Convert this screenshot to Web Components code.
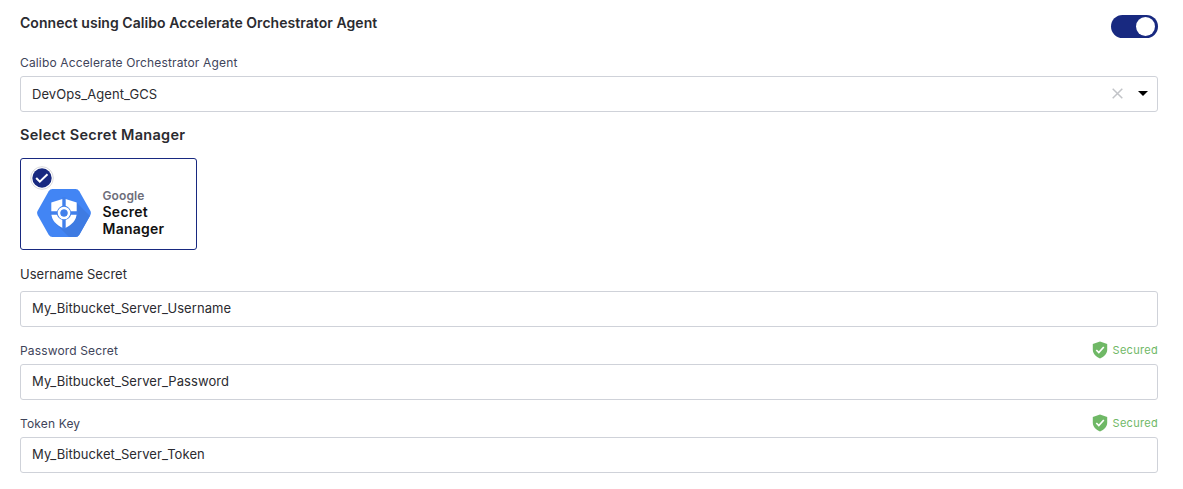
<!DOCTYPE html>
<html lang="en">
<head>
<meta charset="utf-8">
<title>Orchestrator Agent</title>
<style>
  body {
    margin: 0;
    background: #fff;
    font-family: Inter, "Liberation Sans", sans-serif;
  }
</style>
</head>
<body>
<agent-form></agent-form>

<script>
const define = (name, html) =>
  customElements.define(
    name,
    class extends HTMLElement {
      constructor() {
        super();
        this.attachShadow({ mode: "open" }).innerHTML = html;
      }
    }
  );

define("form-heading", `
  <style>
    :host { display: block; font-size: 14px; font-weight: 600; line-height: 20px; letter-spacing: .05px; color: #2b2b30; white-space: nowrap }
  </style>
  <slot></slot>`);

define("toggle-switch", `
  <style>
    :host { display: flex; box-sizing: border-box; width: 47px; height: 23px; padding: 2px 3px; border-radius: 12px; background: #182980; justify-content: flex-end }
    i { width: 19px; height: 19px; border-radius: 50%; background: #fff }
  </style>
  <i></i>`);

define("secured-badge", `
  <style>
    :host { display: flex; align-items: center; gap: 5px; padding-bottom: 2px; font-size: 11px; line-height: 18px; letter-spacing: .3px; color: #6fb866; white-space: nowrap }
    svg { display: block }
  </style>
  <svg width="16" height="18" viewBox="0 0 16 18">
    <path d="M8 .5 15.2 3v5.8c0 4-3.2 7.2-7.2 8.7C4 16 .8 12.8.8 8.8V3z" fill="#6fb866"/>
    <path d="m4.3 9 2.5 2.500 5-5.500" fill="none" stroke="#fff" stroke-width="1.7"/>
  </svg>
  <span><slot></slot></span>`);

// label row on top, bordered value box below
define("form-field", `
  <style>
    :host { display: block }
    .top { display: flex; justify-content: space-between; align-items: center; box-sizing: border-box; height: var(--label-height, 28px); padding: var(--label-padding, 1px 0 0) }
    .label { font-size: var(--label-size, 12px); line-height: 18px; letter-spacing: var(--label-spacing, .15px); color: var(--label-color, #40445a); white-space: nowrap }
    .box { display: flex; align-items: center; justify-content: space-between; box-sizing: border-box; height: 36px; padding: 0 9px 0 11px; border: 1px solid #cfd2d9; border-radius: 3px; background: #fff }
    .value { font-size: 13px; line-height: 20px; letter-spacing: .07px; color: #2b2b30; padding-bottom: var(--value-lift, 2px) }
  </style>
  <div class="top"><span class="label"><slot name="label"></slot></span><slot name="badge"></slot></div>
  <div class="box"><span class="value"><slot></slot></span><slot name="end"></slot></div>`);

define("select-actions", `
  <style>
    :host { display: flex; align-items: center; gap: 15px; padding-bottom: 1px }
    svg { display: block }
  </style>
  <svg width="11" height="11" viewBox="0 0 11 11"><path d="m.7.7 9.6 9.6M10.3.7.7 10.3" stroke="#c2c4c8" stroke-width="1.5"/></svg>
  <svg width="10" height="5" viewBox="0 0 10 5"><path d="M0 0h10L5 5z"/></svg>`);

define("provider-card", `
  <style>
    :host { position: relative; display: flex; align-items: center; box-sizing: border-box; width: 177px; height: 92px; padding: 17px 0 0 16px; border: 1px solid #182980; border-radius: 3px; gap: 11.5px }
    svg { display: block }
    .check { position: absolute; left: 9px; top: 7px }
    .name { display: flex; flex-direction: column; font-size: 14px; font-weight: 600; line-height: 17px; letter-spacing: .25px; color: #111; white-space: nowrap }
    .vendor { font-size: 12px; line-height: 15px; letter-spacing: .1px; color: #6e6e7a }
  </style>
  <svg width="54" height="48" viewBox="0 0 54 48">
    <defs><clipPath id="hex"><path d="M15.5 0h23q2.5 0 3.8 2.2L53.3 21.8q1.2 2.2 0 4.4L42.3 45.8Q41 48 38.5 48h-23q-2.5 0-3.8-2.2L.7 26.2q-1.2-2.2 0-4.4L11.7 2.2Q13 0 15.5 0z"/></clipPath></defs>
    <g clip-path="url(#hex)">
      <path d="M0 0h54v48H0z" fill="#4285f4"/>
      <path d="M39.5 13.5 60 34v20H38L18 34l9-10z" fill="#3e7be2"/>
    </g>
    <path d="M27 9.5 39.7 13.5V24c0 7-5 12.5-12.7 15.5C19.3 36.5 14.3 31 14.3 24V13.5z" fill="#fff"/>
    <path d="M27 8v32M13 24h28" stroke="#4180eb" stroke-width="3.4"/>
    <circle cx="27" cy="24" r="7.2" fill="#4180eb"/>
    <circle cx="27" cy="24" r="4.900" fill="none" stroke="#fff" stroke-width="2.800"/>
    <circle cx="27" cy="24" r="3.500" fill="#4180eb"/>
  </svg>
  <div class="name"><span class="vendor"><slot name="vendor"></slot></span><slot></slot></div>
  <svg class="check" width="24" height="24" viewBox="0 0 24 24">
    <circle cx="12" cy="12" r="11.3" fill="#fff" stroke="#d9d9dc"/>
    <circle cx="12" cy="12" r="9.7" fill="#182980"/>
    <path d="m6.2 12 3.6 3.7 7.7-7.4" fill="none" stroke="#fff" stroke-width="2"/>
  </svg>`);

define("agent-form", `
  <style>
    :host { display: flex; flex-direction: column; box-sizing: border-box; width: 1183px; height: 489px; padding: 13px 25px 0 20px }
    header { display: flex; justify-content: space-between; height: 35px }
    toggle-switch { margin-top: 2px }
    .agent { --value-lift: 0px }
    .select { margin-top: 13px; font-size: 14.5px; letter-spacing: .3px }
    provider-card { margin-top: 13px }
    .user { margin-top: 10px; --label-height: 31px; --label-padding: 0 0 4px; --label-size: 13px; --label-spacing: .02px; --label-color: #2b2b30 }
    .secret { margin-top: 9px }
  </style>
  <header>
    <form-heading>Connect using Calibo Accelerate Orchestrator Agent</form-heading>
    <toggle-switch></toggle-switch>
  </header>
  <form-field class="agent">
    <span slot="label">Calibo Accelerate Orchestrator Agent</span>
    DevOps_Agent_GCS
    <select-actions slot="end"></select-actions>
  </form-field>
  <form-heading class="select">Select Secret Manager</form-heading>
  <provider-card>
    <span slot="vendor">Google</span>
    <span>Secret</span><span>Manager</span>
  </provider-card>
  <form-field class="user">
    <span slot="label">Username Secret</span>
    My_Bitbucket_Server_Username
  </form-field>
  <form-field class="secret">
    <span slot="label">Password Secret</span>
    <secured-badge slot="badge">Secured</secured-badge>
    My_Bitbucket_Server_Password
  </form-field>
  <form-field class="secret">
    <span slot="label">Token Key</span>
    <secured-badge slot="badge">Secured</secured-badge>
    My_Bitbucket_Server_Token
  </form-field>`);
</script>
</body>
</html>
